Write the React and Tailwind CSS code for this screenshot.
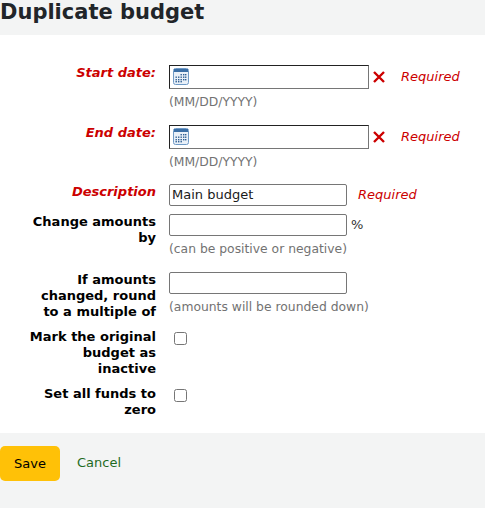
function Calendar() {
  return (
    <svg width="16" height="17" viewBox="0 0 16 17" className="shrink-0 mb-[1px]">
      <rect x="0.5" y="0.5" width="15" height="16" rx="2" fill="#e9f0f8" stroke="#6f9ac6" />
      <rect x="1" y="1" width="14" height="3" fill="#3a6ea5" />
      {[6, 8.5, 11, 13].flatMap((y, r) =>
        [2.5, 5, 7.5, 10, 12].map((x, c) =>
          (r === 0 && c < 2) || (r === 3 && c > 2) ? null : <rect key={`${r}-${c}`} x={x} y={y} width="1.4" height="1.4" fill="#2f5f93" />
        )
      )}
    </svg>
  );
}
function Label({ children, req }) {
  return (
    <div className={`w-[156px] pl-[26px] shrink-0 text-right font-bold text-[13px] leading-[16px] ${req ? "text-[#cc0000] italic" : "text-[#000]"}`}>
      {children}
    </div>
  );
}
function Hint({ children }) {
  return <div className="text-[12.35px] leading-[16px] text-[#727272] mt-[5px]">{children}</div>;
}
function DateRow({ label, className = "" }) {
  return (
    <div className={`flex gap-[13px] ${className}`}>
      <Label req>{label}</Label>
      <div>
        <div className="flex items-center">
          <div className="w-[200px] h-[24px] border border-[#767676] border-t-[#222] border-l-[#222] pl-[3px] flex items-center">
            <Calendar />
          </div>
          <svg width="12" height="12" viewBox="0 0 12 12" className="ml-[4px]"><path d="M1 1L11 11M11 1L1 11" stroke="#cc0000" strokeWidth="2.4" /></svg>
          <span className="ml-[16px] text-[13px] italic text-[#cc0000]">Required</span>
        </div>
        <Hint>(MM/DD/YYYY)</Hint>
      </div>
    </div>
  );
}
function TextInput({ value = "" }) {
  return <input readOnly value={value} className="block w-[178px] h-[22px] border border-[#767676] rounded-[2px] px-[2px] pb-[1px] text-[13px] text-[#1a1a1a] bg-white outline-none" style={{ fontFamily: "inherit" }} />;
}
function Check() {
  return <span className="block w-[13px] h-[13px] border border-[#767676] rounded-[2.5px] bg-white" />;
}
export default function App() {
  return (
    <div className="w-[485px] h-[508px] bg-[#f3f4f4] overflow-hidden" style={{ fontFamily: '"DejaVu Sans", sans-serif' }}>
      <h1 className="h-[35px] text-[21px] font-bold leading-[24px] text-[#212529]">Duplicate budget</h1>
      <div className="bg-white h-[398px] pt-[30px]">
        <DateRow label="Start date:" />
        <DateRow label="End date:" className="mt-[15px]" />
        <div className="flex gap-[13px] mt-[14px]">
          <Label req>Description</Label>
          <div className="flex items-center h-[22px]">
            <TextInput value="Main budget" />
            <span className="ml-[11px] text-[13px] italic text-[#cc0000]">Required</span>
          </div>
        </div>
        <div className="flex gap-[13px] mt-[8px]">
          <Label>Change amounts by</Label>
          <div>
            <div className="flex items-center"><TextInput /><span className="ml-[4px] text-[13px] text-[#333]">%</span></div>
            <Hint>(can be positive or negative)</Hint>
          </div>
        </div>
        <div className="flex gap-[13px] mt-[15px]">
          <Label>If amounts changed, round to a multiple of</Label>
          <div>
            <TextInput />
            <Hint>(amounts will be rounded down)</Hint>
          </div>
        </div>
        <div className="flex gap-[13px] mt-[9px]">
          <Label>Mark the original budget as inactive</Label>
          <div className="pl-[5px] pt-[3px]"><Check /></div>
        </div>
        <div className="flex gap-[13px] mt-[9px]">
          <Label>Set all funds to zero</Label>
          <div className="pl-[5px] pt-[3px]"><Check /></div>
        </div>
      </div>
      <div className="flex items-center mt-[13px]">
        <button className="w-[60px] h-[35px] bg-[#ffc107] rounded-[5px] text-[13px] text-[#000]">Save</button>
        <a className="ml-[17px] text-[13px] leading-[16px] mb-[2px] text-[#1f6b1f]">Cancel</a>
      </div>
    </div>
  );
}
